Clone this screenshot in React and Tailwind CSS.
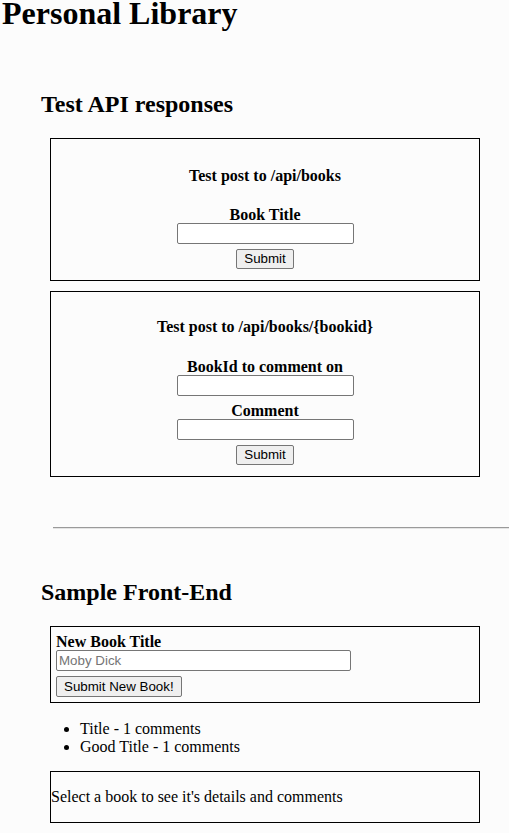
import React from "react";

const serif = "font-['Liberation_Serif','Times_New_Roman',serif]";
const inputCls =
  "h-[21px] border border-[#767676] rounded-[2px] bg-white px-[2px] text-[13.33px] font-['Liberation_Sans',Arial,sans-serif] outline-none placeholder:text-[#757575]";
const buttonCls =
  "border border-[#767676] rounded-[2px] bg-[#efefef] px-[7px] text-[13.33px] leading-none text-black font-['Liberation_Sans',Arial,sans-serif]";
// 16px bold lines, 18px tall, text nudged down a little
const label = "text-[16px] font-bold pt-[4px] leading-[14px]";

const books = [
  { title: "Title", comments: 1 },
  { title: "Good Title", comments: 1 },
];

const App = () => {
  const stop = (e) => e.preventDefault();

  return (
    <div className={`${serif} bg-[#fcfcfc] text-black min-h-[833px] overflow-hidden`}>
      <h1 className="text-[32px] font-bold leading-[27px] pl-[2px]">Personal Library</h1>

      <section className="pl-[40px]">
        <h2 className="mt-[62px] text-[24px] font-bold pt-[4px] leading-[23px] pl-[1px]">
          Test API responses
        </h2>

        {/* post a new book */}
        <form
          onSubmit={stop}
          className="mt-[22px] ml-[10px] w-[430px] border border-black flex flex-col items-center pt-[27px] pb-[11px]"
        >
          <h4 className="text-[16px] font-bold pt-[2px] leading-[16px]">Test post to /api/books</h4>
          <label className={`mt-[20px] ${label}`}>Book Title</label>
          <input type="text" className={`${inputCls} mt-[1px] w-[177px]`} />
          <button type="submit" className={`${buttonCls} mt-[5px] h-[20px]`}>
            Submit
          </button>
        </form>

        {/* post a comment */}
        <form
          onSubmit={stop}
          className="mt-[10px] ml-[10px] w-[430px] border border-black flex flex-col items-center pt-[26px] pb-[11px]"
        >
          <h4 className="text-[16px] font-bold leading-[18px]">
            Test post to /api/books/{"{bookid}"}
          </h4>
          <label className={`mt-[20px] ${label}`}>BookId to comment on</label>
          <input type="text" className={`${inputCls} mt-[1px] w-[177px]`} />
          <label className={`mt-[4px] ${label}`}>Comment</label>
          <input type="text" className={`${inputCls} mt-[1px] w-[177px]`} />
          <button type="submit" className={`${buttonCls} mt-[5px] h-[20px]`}>
            Submit
          </button>
        </form>

        <div className="mt-[50px] ml-[13px] w-[500px] border-t border-b border-t-[#9a9a9a] border-b-[#e4e4e4]" />

        <h2 className="mt-[49px] text-[24px] font-bold pt-[2px] leading-[25px] pl-[1px]">
          Sample Front-End
        </h2>

        <form
          onSubmit={stop}
          className="mt-[21px] ml-[10px] w-[430px] border border-black pt-[4px] pb-[5px] pl-[5px] flex flex-col items-start"
        >
          <label className={label}>New Book Title</label>
          <input
            type="text"
            placeholder="Moby Dick"
            className={`${inputCls} mt-[1px] w-[295px]`}
          />
          <button type="submit" className={`${buttonCls} mt-[5px] h-[21px]`}>
            Submit New Book!
          </button>
        </form>

        <ul className="mt-[15px] pl-[40px] list-disc text-[16px]">
          {books.map((b) => (
            <li key={b.title} className="pt-[4px] leading-[14px]">
              {b.title} - {b.comments} comments
            </li>
          ))}
        </ul>

        <div className="mt-[17px] ml-[10px] w-[430px] border border-black pt-[16px] pb-[16px] text-[16px] leading-[18px]">
          Select a book to see it's details and comments
        </div>
      </section>
    </div>
  );
};

export default App;
